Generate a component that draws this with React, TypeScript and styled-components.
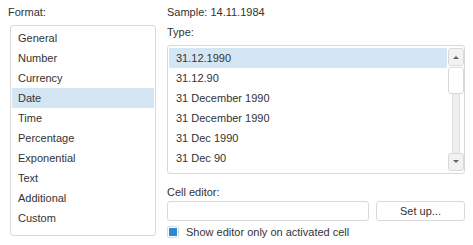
import styled, { createGlobalStyle } from "styled-components";

const COLORS = {
  text: "#333333",
  border: "#d9d9d9",
  select: "#d4e6f4",
  blue: "#2a8ad2",
  track: "#efefef",
};

const GlobalStyle = createGlobalStyle`
  html, body {
    margin: 0;
    padding: 0;
    background: #ffffff;
  }
  body {
    font-family: "Liberation Sans", Arial, sans-serif;
    font-size: 11px;
    color: ${COLORS.text};
  }
`;

const Page = styled.div`
  display: grid;
  grid-template-columns: 148px 298px;
  column-gap: 11px;
  padding: 5px 8px 0 8px;
  width: 473px;
  height: 245px;
  box-sizing: border-box;
`;

const Column = styled.div`
  display: flex;
  flex-direction: column;
`;

const Label = styled.div<{ $mt?: number; $h?: number }>`
  height: ${({ $h }) => $h ?? 20}px;
  margin-top: ${({ $mt }) => $mt ?? 0}px;
  line-height: 14px;
`;

const ListBox = styled.div<{ $height: number; $ml?: number }>`
  box-sizing: border-box;
  height: ${({ $height }) => $height}px;
  margin-left: ${({ $ml }) => $ml ?? 0}px;
  border: 1px solid ${COLORS.border};
  border-radius: 3px;
  padding: 2px 1px;
  display: flex;
  overflow: hidden;
`;

const Items = styled.div`
  flex: 1;
  display: flex;
  flex-direction: column;
`;

const Item = styled.div<{ $active?: boolean; $pad?: number }>`
  height: 20px;
  line-height: 20px;
  padding-left: ${({ $pad }) => $pad ?? 6}px;
  background: ${({ $active }) => ($active ? COLORS.select : "transparent")};
  white-space: nowrap;
`;

const ScrollBar = styled.div`
  width: 17px;
  display: flex;
  flex-direction: column;
  align-items: center;
  margin-right: -1px;
`;

const ScrollButton = styled.div<{ $h: number }>`
  box-sizing: border-box;
  width: 16px;
  height: ${({ $h }) => $h}px;
  border: 1px solid ${COLORS.border};
  border-radius: 3px;
  background: #f2f2f2;
  display: flex;
  align-items: center;
  justify-content: center;
  flex-shrink: 0;
`;

const Thumb = styled(ScrollButton)`
  background: #ffffff;
  margin-top: 1px;
`;

const Track = styled.div`
  flex: 1;
  width: 6px;
  background: ${COLORS.track};
  border-left: 1px solid #e0e0e0;
  border-right: 1px solid #e0e0e0;
`;

const EditorRow = styled.div`
  display: flex;
  gap: 7px;
  height: 20px;
  margin-top: 2px;
`;

const Input = styled.div`
  box-sizing: border-box;
  width: 202px;
  height: 20px;
  border: 1px solid ${COLORS.border};
  border-radius: 3px;
`;

const Button = styled.div`
  box-sizing: border-box;
  flex: 1;
  height: 20px;
  border: 1px solid ${COLORS.border};
  border-radius: 3px;
  display: flex;
  align-items: center;
  justify-content: center;
`;

const CheckRow = styled.div`
  display: flex;
  align-items: center;
  gap: 7px;
  margin-top: 5px;
  height: 12px;
`;

const CheckBox = styled.div`
  box-sizing: border-box;
  width: 12px;
  height: 12px;
  border: 1px solid ${COLORS.border};
  border-radius: 2px;
  display: flex;
  align-items: center;
  justify-content: center;

  &::after {
    content: "";
    width: 8px;
    height: 8px;
    background: ${COLORS.blue};
  }
`;

const formats = [
  "General",
  "Number",
  "Currency",
  "Date",
  "Time",
  "Percentage",
  "Exponential",
  "Text",
  "Additional",
  "Custom",
];

const types = [
  "31.12.1990",
  "31.12.90",
  "31 December 1990",
  "31 December 1990",
  "31 Dec 1990",
  "31 Dec 90",
];

const Arrow = ({ up }: { up?: boolean }) => (
  <svg width="6" height="4" viewBox="0 0 6 4">
    <path d={up ? "M0 4 L3 1 L6 4 Z" : "M0 0 L3 3 L6 0 Z"} fill="#666" />
  </svg>
);

export default function App() {
  return (
    <Page>
      <GlobalStyle />
      <Column>
        <Label>Format:</Label>
        <ListBox $height={211} $ml={2}>
          <Items>
            {formats.map((f) => (
              <Item key={f} $active={f === "Date"}>
                {f}
              </Item>
            ))}
          </Items>
        </ListBox>
      </Column>
      <Column>
        <Label>Sample: 14.11.1984</Label>
        <Label>Type:</Label>
        <ListBox $height={129}>
          <Items>
            {types.map((t, i) => (
              <Item key={i} $active={i === 0} $pad={7}>
                {t}
              </Item>
            ))}
          </Items>
          <ScrollBar>
            <ScrollButton $h={18}>
              <Arrow up />
            </ScrollButton>
            <Thumb $h={27} />
            <Track />
            <ScrollButton $h={18}>
              <Arrow />
            </ScrollButton>
          </ScrollBar>
        </ListBox>
        <Label $mt={11} $h={14}>
          Cell editor:
        </Label>
        <EditorRow>
          <Input />
          <Button>Set up...</Button>
        </EditorRow>
        <CheckRow>
          <CheckBox />
          <span>Show editor only on activated cell</span>
        </CheckRow>
      </Column>
    </Page>
  );
}
